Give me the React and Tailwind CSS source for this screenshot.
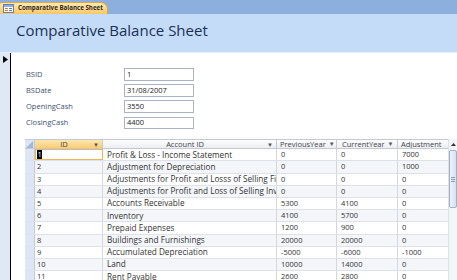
import React from 'react';

const fields = [
    { label: 'BSID', value: '1' },
    { label: 'BSDate', value: '31/08/2007' },
    { label: 'OpeningCash', value: '3550' },
    { label: 'ClosingCash', value: '4400' },
];

const rows = [
    ['1', 'Profit & Loss - Income Statement', '0', '0', '7000'],
    ['2', 'Adjustment for Depreciation', '0', '0', '1000'],
    ['3', 'Adjustments for Profit and Losss of Selling Fixed Assets', '0', '0', '0'],
    ['4', 'Adjustments for Profit and Loss of Selling Investments', '0', '0', '0'],
    ['5', 'Accounts Receivable', '5300', '4100', '0'],
    ['6', 'Inventory', '4100', '5700', '0'],
    ['7', 'Prepaid Expenses', '1200', '900', '0'],
    ['8', 'Buildings and Furnishings', '20000', '20000', '0'],
    ['9', 'Accumulated Depreciation', '-5000', '-6000', '-1000'],
    ['10', 'Land', '10000', '14000', '0'],
    ['11', 'Rent Payable', '2600', '2800', '0'],
];

const Arrow = () => <span className="text-[6px] text-[#555] leading-none">▼</span>;

const FormIcon = () => (
    <svg width="11" height="9" viewBox="0 0 11 9">
        <rect x="0.5" y="0.5" width="10" height="8" fill="#fff" stroke="#5d7fb3" />
        <rect x="1" y="1" width="9" height="2" fill="#8fb0dc" />
        <rect x="2" y="4" width="3" height="1" fill="#d9822b" />
        <rect x="6" y="4" width="3" height="1" fill="#5d7fb3" />
        <rect x="2" y="6" width="3" height="1" fill="#d9822b" />
        <rect x="6" y="6" width="3" height="1" fill="#5d7fb3" />
    </svg>
);

const App = () => {
    return (
        <div className="w-[457px] h-[280px] overflow-hidden bg-white flex flex-col font-['Open_Sans',sans-serif] text-[#333]">
            {/* document tab strip */}
            <div className="h-[14px] bg-[#8cafde] flex items-end shrink-0">
                <div className="h-[12px] w-[108px] flex items-center gap-[4px] pl-[3px] rounded-tl-[2px] rounded-tr-[7px] bg-gradient-to-b from-[#fee9ad] to-[#f9c764] border-t border-r border-[#d8a94c]">
                    <FormIcon />
                    <span className="text-[6.2px] font-bold text-[#2b2b2b] whitespace-nowrap leading-none">Comparative Balance Sheet</span>
                </div>
            </div>

            {/* form header */}
            <div className="h-[39px] bg-[#c5dcf9] border-b border-[#e4eefb] shrink-0 pl-[16px] pt-[6px]">
                <h1 className="text-[15px] text-[#1b3153] leading-[20px] whitespace-nowrap">Comparative Balance Sheet</h1>
            </div>

            <div className="flex flex-1 min-h-0">
                {/* record selector */}
                <div className="w-[11px] bg-[#dfe8f5] border-r border-black shrink-0 pt-[3px] pl-[3px]">
                    <svg width="5" height="7" viewBox="0 0 5 7">
                        <path d="M0 0 L5 3.5 L0 7 Z" fill="#000" />
                    </svg>
                </div>

                <div className="flex-1 min-w-0 flex flex-col">
                    {/* detail fields */}
                    <div className="pl-[15px] pt-[15px] flex flex-col gap-[3.5px]">
                        {fields.map((f) => (
                            <div key={f.label} className="flex items-center h-[12.7px]">
                                <span className="w-[98px] text-[7.5px] text-[#3e5273]">{f.label}</span>
                                <div className="w-[70px] h-[12.7px] border border-[#a9b3c1] bg-white flex items-center px-[2px] text-[7.5px] text-[#222]">
                                    {f.value}
                                </div>
                            </div>
                        ))}
                    </div>

                    {/* datasheet */}
                    <div className="mt-[10px] ml-[14px] flex min-h-0">
                        <div className="w-[423px] text-[7.5px] text-[#333]">
                            <div className="flex h-[10px] border-y border-[#c3cad6] bg-gradient-to-b from-[#fdfdfd] to-[#eceef2] text-[#444]">
                                <div className="w-[10px] bg-[#dce6f3] border-r border-[#c3cad6] relative">
                                    <svg className="absolute left-[1px] top-[1px]" width="7" height="7" viewBox="0 0 7 7">
                                        <path d="M7 0 L7 7 L0 7 Z" fill="#9fb8da" />
                                    </svg>
                                </div>
                                <div className="w-[68px] bg-gradient-to-b from-[#fde7ac] to-[#f9cd7a] border-r border-[#c3cad6] flex items-center">
                                    <span className="flex-1 text-center">ID</span>
                                    <span className="pr-[3px]"><Arrow /></span>
                                </div>
                                <div className="w-[174px] border-r border-[#c3cad6] flex items-center">
                                    <span className="flex-1 text-center">Account ID</span>
                                    <span className="pr-[3px]"><Arrow /></span>
                                </div>
                                <div className="w-[60px] border-r border-[#c3cad6] flex items-center gap-[3px] pl-[3px]">
                                    <span>PreviousYear</span>
                                    <Arrow />
                                </div>
                                <div className="w-[61px] border-r border-[#c3cad6] flex items-center gap-[3px] pl-[5px]">
                                    <span>CurrentYear</span>
                                    <Arrow />
                                </div>
                                <div className="w-[50px] flex items-center pl-[3px] overflow-hidden whitespace-nowrap">
                                    <span>Adjustment</span>
                                </div>
                            </div>
                            {rows.map((r, i) => (
                                <div
                                    key={r[0]}
                                    className={`flex h-[12.2px] border-b border-[#dde2ea] ${i % 2 === 1 ? 'bg-[#f4f6f9]' : 'bg-white'}`}
                                >
                                    <div className="w-[10px] bg-[#dde7f4] border-r border-[#c3cad6]" />
                                    <div className={`w-[68px] border-r border-[#d2d8e1] pl-[2px] flex items-center ${i === 0 ? 'outline outline-1 -outline-offset-1 outline-[#f0b554]' : ''}`}>
                                        {i === 0 ? <span className="bg-black text-white leading-[9px] px-[0.5px]">1</span> : r[0]}
                                    </div>
                                    <div className="w-[174px] border-r border-[#d2d8e1] pl-[4px] flex items-center whitespace-nowrap overflow-hidden text-[8.2px]">
                                        {r[1]}
                                    </div>
                                    <div className="w-[60px] border-r border-[#d2d8e1] pl-[4px] flex items-center">{r[2]}</div>
                                    <div className="w-[61px] border-r border-[#d2d8e1] pl-[4px] flex items-center">{r[3]}</div>
                                    <div className="w-[50px] pl-[4px] flex items-center">{r[4]}</div>
                                </div>
                            ))}
                        </div>

                        {/* vertical scrollbar */}
                        <div className="w-[9px] bg-[#f3f5f8] border-l border-[#dbe1e9] flex flex-col items-center shrink-0">
                            <div className="h-[10px] flex items-center justify-center">
                                <svg width="5" height="3" viewBox="0 0 5 3">
                                    <path d="M0 3 L2.5 0 L5 3 Z" fill="#333" />
                                </svg>
                            </div>
                            <div className="w-[8px] h-[58px] mt-[1px] rounded-[2px] border border-[#9fb1c9] bg-gradient-to-r from-[#eef3fa] to-[#d6e1ef] flex flex-col items-center justify-center gap-[1px]">
                                <div className="w-[4px] h-px bg-[#8a9bb3]" />
                                <div className="w-[4px] h-px bg-[#8a9bb3]" />
                                <div className="w-[4px] h-px bg-[#8a9bb3]" />
                            </div>
                        </div>
                    </div>
                </div>
            </div>
        </div>
    );
};

export default App;
